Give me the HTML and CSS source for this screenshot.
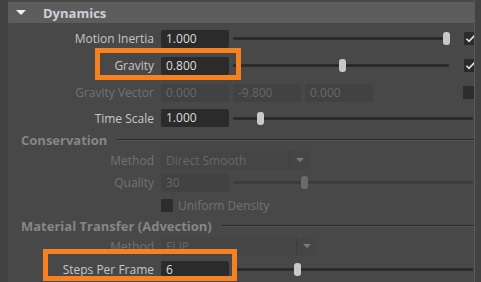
FILE: index.html
```html
<!DOCTYPE html>
<html lang="en">

<head>
    <meta charset="UTF-8">
    <meta name="viewport" content="width=device-width, initial-scale=1.0">
    <title>Dynamics</title>
    <link rel="stylesheet" href="styles.css">
</head>

<body>
    <div class="editor">
        <div class="gutter"></div>

        <div class="panel">
            <div class="frame-header">
                <span class="arrow"></span>
                <span class="frame-title">Dynamics</span>
            </div>

            <div class="row row-27">
                <div class="lbl">Motion Inertia</div>
                <div class="field">1.000</div>
                <div class="slider">
                    <div class="track"></div>
                    <div class="thumb" style="left: 210px"></div>
                </div>
                <div class="check on">
                    <svg width="13" height="13" viewBox="0 0 13 13"><path d="M2.5 6.8 L5 9.3 L10.5 3.5" fill="none" stroke="#e6e6e6" stroke-width="1.6"/></svg>
                </div>
            </div>

            <div class="row row-27">
                <div class="lbl">Gravity</div>
                <div class="field">0.800</div>
                <div class="slider">
                    <div class="track"></div>
                    <div class="thumb" style="left: 106px"></div>
                </div>
                <div class="check on">
                    <svg width="13" height="13" viewBox="0 0 13 13"><path d="M2.5 6.8 L5 9.3 L10.5 3.5" fill="none" stroke="#e6e6e6" stroke-width="1.6"/></svg>
                </div>
            </div>

            <div class="row row-27 disabled">
                <div class="lbl">Gravity Vector</div>
                <div class="field">0.000</div>
                <div class="field vec">-9.800</div>
                <div class="field vec">0.000</div>
                <div class="check push"></div>
            </div>

            <div class="row row-24">
                <div class="lbl">Time Scale</div>
                <div class="field">1.000</div>
                <div class="slider wide">
                    <div class="track"></div>
                    <div class="thumb" style="left: 24px"></div>
                </div>
            </div>

            <div class="section sec-cons">
                <div class="section-title">Conservation</div>
                <div class="section-line"></div>
            </div>

            <div class="row row-22 disabled">
                <div class="lbl">Method</div>
                <div class="combo c1">
                    <span class="combo-text">Direct Smooth</span>
                    <span class="combo-btn"><span class="tri"></span></span>
                </div>
            </div>

            <div class="row row-23 disabled">
                <div class="lbl">Quality</div>
                <div class="field">30</div>
                <div class="slider wide">
                    <div class="track"></div>
                    <div class="thumb" style="left: 68px"></div>
                </div>
            </div>

            <div class="row row-23 disabled">
                <div class="lbl"></div>
                <div class="check box"></div>
                <div class="check-label">Uniform Density</div>
            </div>

            <div class="section sec-mat">
                <div class="section-title">Material Transfer (Advection)</div>
                <div class="section-line"></div>
            </div>

            <div class="row row-24 disabled">
                <div class="lbl">Method</div>
                <div class="combo c2">
                    <span class="combo-text">FLIP</span>
                    <span class="combo-btn"><span class="tri"></span></span>
                </div>
            </div>

            <div class="row row-23">
                <div class="lbl">Steps Per Frame</div>
                <div class="field">6</div>
                <div class="slider wide">
                    <div class="track"></div>
                    <div class="thumb" style="left: 61px"></div>
                </div>
            </div>
        </div>

        <div class="edge"></div>

        <!-- highlight boxes drawn over the panel -->
        <div class="mark mark-gravity"></div>
        <div class="mark mark-steps"></div>
    </div>
</body>

</html>
```

FILE: styles.css
```css
* {
    margin: 0;
    padding: 0;
    box-sizing: border-box;
}

body {
    background-color: #444444;
    font-family: "Open Sans", "DejaVu Sans", sans-serif;
    font-size: 12px;
    color: #c6c6c6;
}

.editor {
    position: relative;
    display: flex;
    width: 481px;
    height: 282px;
    overflow: hidden;
}

.gutter {
    width: 8px;
    background-color: #434343;
}

.panel {
    width: 466px;
    background-color: #484848;
    overflow: hidden;
}

.edge {
    flex: 1;
    background-color: #434343;
    border-left: 1px solid #5a5a5a;
}

/* frame header */

.frame-header {
    display: flex;
    align-items: center;
    height: 21px;
    margin: 2px 0 2px -1px;
    background-color: #5d5d5d;
    border-radius: 2px 0 0 2px;
}

.arrow {
    width: 0;
    height: 0;
    margin: 0 17px 0 9px;
    border-left: 5px solid transparent;
    border-right: 5px solid transparent;
    border-top: 5px solid #f0f0f0;
}

.frame-title {
    font-weight: bold;
    font-size: 13px;
    color: #cbd1d9;
}

/* rows */

.row {
    display: flex;
    align-items: center;
}

.row > * {
    flex-shrink: 0;
}

.row-27 { height: 27px; }
.row-24 { height: 24px; }
.row-23 { height: 23px; }
.row-22 { height: 22px; }

.lbl {
    width: 146px;
    margin-right: 7px;
    text-align: right;
    white-space: nowrap;
}

.field {
    width: 68px;
    height: 18px;
    padding-left: 5px;
    line-height: 18px;
    background-color: #2b2b2b;
    color: #dedede;
    border-radius: 2px;
}

.field.vec {
    margin-left: 4px;
}

.slider {
    position: relative;
    width: 216px;
    height: 13px;
    margin-left: 4px;
}

.slider.wide {
    width: 240px;
}

.track {
    position: absolute;
    left: 0;
    right: 0;
    top: 5px;
    height: 3px;
    background-color: #2b2b2b;
    border-radius: 1px;
}

.thumb {
    position: absolute;
    top: 0;
    width: 7px;
    height: 13px;
    background-color: #c9c9c9;
    border-radius: 3px;
}

.check {
    width: 13px;
    height: 13px;
    margin-left: 15px;
    background-color: #2b2b2b;
    border-radius: 1px;
}

.check svg {
    display: block;
}

.check.push {
    margin-left: 90px;
}

.check.box {
    width: 12px;
    margin-left: 0;
    background-color: #2e2e2e;
}

.check-label {
    margin-left: 5px;
}

/* disabled state */

.disabled .lbl,
.disabled .check-label {
    color: #727272;
}

.disabled .field {
    background-color: #424242;
    color: #676767;
}

.disabled .thumb {
    background-color: #6b6b6b;
}

.disabled .track {
    background-color: #3d3d3d;
}

.disabled .check {
    background-color: #2d2d2d;
}

/* combo box */

.combo {
    display: flex;
    height: 19px;
    background-color: #454545;
    border-radius: 2px;
    color: #676767;
}

.combo-text {
    flex: 1;
    padding-left: 5px;
    line-height: 19px;
}

.combo-btn {
    display: flex;
    align-items: center;
    justify-content: center;
    width: 20px;
    border-left: 1px solid #3e3e3e;
}

.c1 { width: 148px; }
.c2 { width: 155px; }

.tri {
    width: 0;
    height: 0;
    border-left: 4px solid transparent;
    border-right: 4px solid transparent;
    border-top: 4px solid #7a7a7a;
}

/* section headers */

.section {
    display: flex;
    align-items: center;
    padding-left: 13px;
}

.sec-cons { height: 19px; }
.sec-mat { height: 17px; }

.section-title {
    font-weight: bold;
    font-size: 13px;
    color: #868686;
    white-space: nowrap;
}

.section-line {
    flex: 1;
    height: 1px;
    margin-left: 10px;
    background-color: #2a2a2a;
    box-shadow: 0 1px 0 #535353;
}

/* orange highlights */

.mark {
    position: absolute;
    border: 5px solid #f5821f;
}

.mark-gravity {
    left: 95px;
    top: 48px;
    width: 146px;
    height: 32px;
}

.mark-steps {
    left: 43px;
    top: 249px;
    width: 194px;
    height: 32px;
}
```
